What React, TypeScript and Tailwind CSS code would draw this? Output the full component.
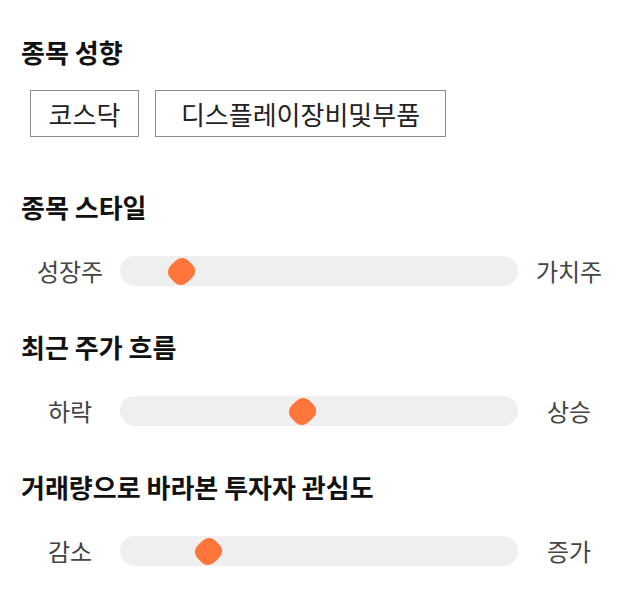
import React from "react";

const font = { fontFamily: '"Noto Sans CJK KR", "Noto Sans", sans-serif' };

function Heading({ children, className = "" }: { children: React.ReactNode; className?: string }) {
  return (
    <h2 className={`pl-[21px] h-[32px] leading-[32px] text-[26px] font-bold text-[#111111] ${className}`}>
      {children}
    </h2>
  );
}

function SliderRow({ left, right, pos, className = "" }: { left: string; right: string; pos: number; className?: string }) {
  return (
    <div className={`flex items-center h-[30px] px-[20px] ${className}`}>
      <div className="w-[100px] text-center text-[24px] leading-[30px] text-[#444444]">{left}</div>
      <div className="relative w-[398px] h-[30px] rounded-full bg-[#efefef]">
        <div className="absolute top-0 w-[30px] h-[30px] flex items-center justify-center" style={{ left: pos - 15 }}>
          <div className="w-[25px] h-[25px] rounded-[9px] bg-[#ff753a] rotate-45 scale-x-[0.95]" />
        </div>
      </div>
      <div className="w-[102px] text-center text-[24px] leading-[30px] text-[#444444]">{right}</div>
    </div>
  );
}

export default function App() {
  return (
    <div className="w-[640px] h-[606px] bg-white pt-[36px]" style={font}>
      <Heading>종목 성향</Heading>
      <div className="flex gap-[16px] pl-[30px] mt-[22px]">
        <div className="w-[109px] h-[47px] border border-[#8a8a8a] flex items-center justify-center text-[26px] text-[#222222]">
          코스닥
        </div>
        <div className="w-[291px] h-[47px] border border-[#8a8a8a] flex items-center justify-center text-[26px] text-[#222222]">
          디스플레이장비및부품
        </div>
      </div>
      <Heading className="mt-[54px]">종목 스타일</Heading>
      <SliderRow className="mt-[33px]" left="성장주" right="가치주" pos={61} />
      <Heading className="mt-[45px]">최근 주가 흐름</Heading>
      <SliderRow className="mt-[33px]" left="하락" right="상승" pos={182} />
      <Heading className="mt-[45px]">거래량으로 바라본 투자자 관심도</Heading>
      <SliderRow className="mt-[33px]" left="감소" right="증가" pos={88} />
    </div>
  );
}
